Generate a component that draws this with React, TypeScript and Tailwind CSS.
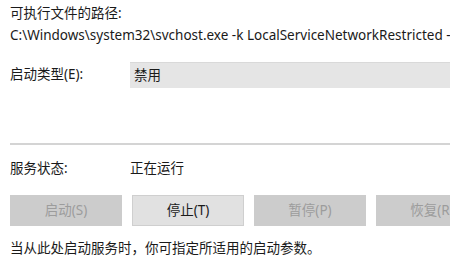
import React from 'react';

const font = { fontFamily: '"Noto Sans", "Noto Sans CJK SC", sans-serif' };

const Btn: React.FC<{ label: string; enabled?: boolean }> = ({ label, enabled }) => (
  <button
    className={`w-[112px] h-[31px] shrink-0 text-[13.5px] border ${
      enabled
        ? 'bg-[#e1e1e1] border-[#cfcfcf] text-[#1a1a1a]'
        : 'bg-[#cccccc] border-[#cccccc] text-[#9c9c9c]'
    }`}
  >
    {label}
  </button>
);

export default function App() {
  return (
    <div className="w-[450px] h-[269px] bg-white overflow-hidden text-[#1a1a1a] text-[13.5px] leading-none pl-[10px]" style={font}>
      <div className="pt-[7px] h-[28px] whitespace-nowrap">可执行文件的路径:</div>
      <div className="h-[28px] pt-[1px] whitespace-nowrap">C:\Windows\system32\svchost.exe -k LocalServiceNetworkRestricted -p</div>
      <div className="flex items-center h-[26px] mt-[6px]">
        <div className="w-[120px] whitespace-nowrap">启动类型(E):</div>
        <div className="flex-1 h-[26px] bg-[#e5e5e5] border-t border-[#d9d9d9] flex items-center pl-[4px]">禁用</div>
      </div>
      <div className="h-[2px] bg-[#d4d4d4] mt-[55px]" />
      <div className="flex items-center h-[16px] mt-[16px]">
        <div className="w-[120px]">服务状态:</div>
        <div>正在运行</div>
      </div>
      <div className="flex gap-[10px] mt-[18px]">
        <Btn label="启动(S)" />
        <Btn label="停止(T)" enabled />
        <Btn label="暂停(P)" />
        <Btn label="恢复(R)" />
      </div>
      <div className="mt-[16px] whitespace-nowrap">当从此处启动服务时，你可指定所适用的启动参数。</div>
    </div>
  );
}
